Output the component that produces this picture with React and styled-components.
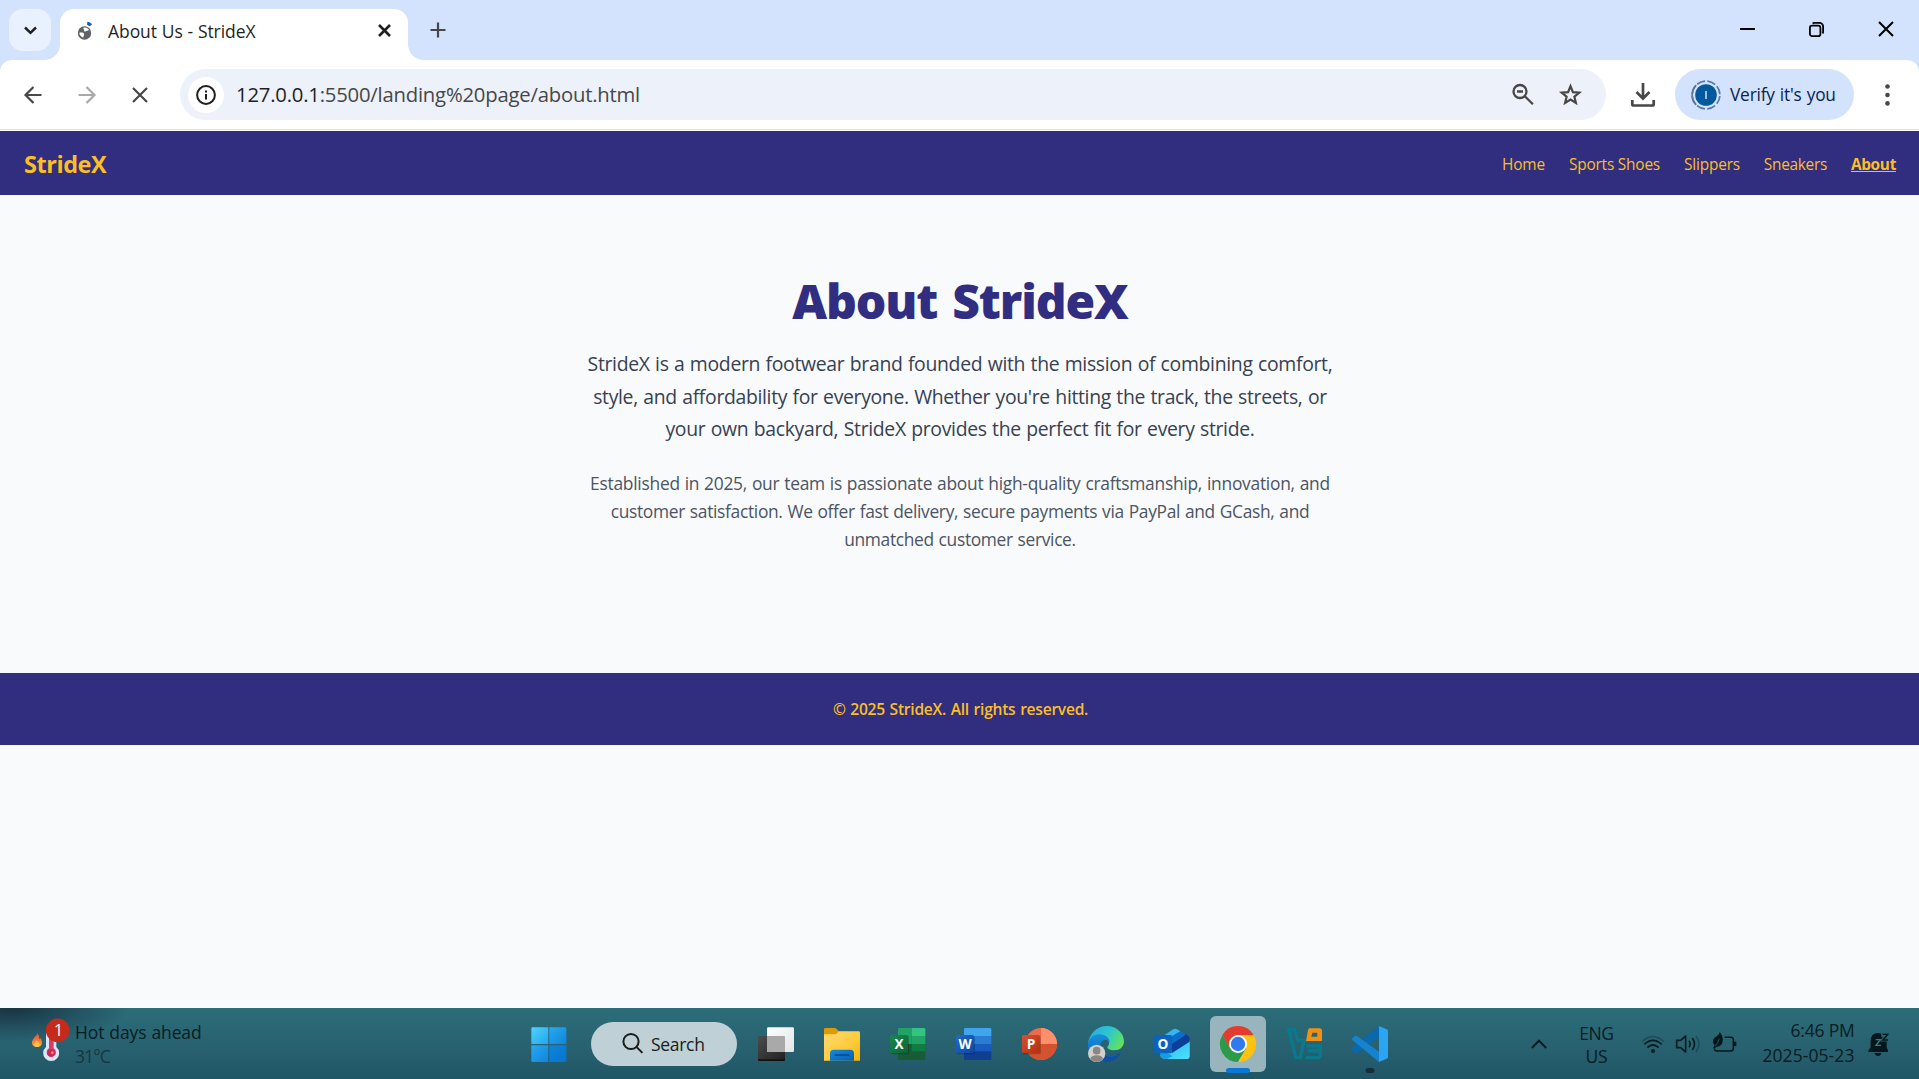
import React from "react";
import styled, { createGlobalStyle } from "styled-components";

const GlobalStyle = createGlobalStyle`
  *, *::before, *::after { box-sizing: border-box; }
  html, body { margin: 0; padding: 0; }
  body {
    overflow: hidden;
    background: #f9fafb;
    font-family: "Open Sans", "Noto Sans", sans-serif;
  }
  svg { display: block; flex: none; }
`;

const Screen = styled.div`
  display: flex;
  flex-direction: column;
  width: 100vw;
  height: 100vh;
  overflow: hidden;
  white-space: nowrap;
`;

const Icon = styled.svg`
  width: ${(p) => p.$w}px;
  height: ${(p) => p.$h || p.$w}px;
  overflow: visible;
`;

/* ---------- Browser chrome ---------- */

const TabStrip = styled.header`
  display: flex;
  flex: none;
  height: 60px;
  padding: 9px 0 0 9px;
  background: #d3e3fd;
`;

const TabSearchButton = styled.button`
  display: flex;
  align-items: center;
  justify-content: center;
  width: 42px;
  height: 42px;
  margin-right: 9px;
  padding: 0;
  border: 0;
  border-radius: 14px;
  background: #e9f1fe;
`;

const Tab = styled.div`
  position: relative;
  display: flex;
  align-items: center;
  width: 348px;
  height: 51px;
  padding: 0 17px 8px 17px;
  border-radius: 14px 14px 0 0;
  background: #fff;

  &::before,
  &::after {
    content: "";
    position: absolute;
    bottom: 0;
    width: 15px;
    height: 15px;
  }
  &::before {
    left: -15px;
    background: radial-gradient(circle at 0 0, transparent 14.5px, #fff 15px);
  }
  &::after {
    right: -15px;
    background: radial-gradient(circle at 100% 0, transparent 14.5px, #fff 15px);
  }
`;

const TabTitle = styled.span`
  flex: 1;
  margin-left: 14px;
  color: #1f1f1f;
  font-size: 17.5px;
  letter-spacing: -0.06px;
  word-spacing: 0.3px;
`;

const NewTabButton = styled.button`
  display: flex;
  align-items: center;
  justify-content: center;
  width: 42px;
  height: 42px;
  margin-left: 9px;
  padding: 0;
  border: 0;
  background: none;
`;

const WindowControls = styled.div`
  display: flex;
  height: 42px;
  margin: -1px -1px 0 auto;
`;

const WindowButton = styled.button`
  display: flex;
  align-items: center;
  justify-content: center;
  width: 69px;
  padding: 0;
  border: 0;
  background: none;
`;

const ToolbarBackdrop = styled.div`
  flex: none;
  height: 71px;
  background: #d3e3fd;
`;

const Toolbar = styled.div`
  display: flex;
  align-items: center;
  height: 71px;
  padding: 0 0 2px;
  border-radius: 12px 12px 0 0;
  background: linear-gradient(#fff 69px, #dfe1e5 69px, #dfe1e5 70px, #fff 70px);
`;

const NavButtons = styled.div`
  display: flex;
  align-items: center;
  width: 180px;
  padding-left: 24px;
  gap: 36px;
`;

const Omnibox = styled.div`
  display: flex;
  align-items: center;
  width: 1426px;
  height: 51px;
  padding: 0 24px 0 7.500px;
  border-radius: 26px;
  background: #ecf1fa;
`;

const SiteInfo = styled.div`
  display: flex;
  align-items: center;
  justify-content: center;
  width: 36px;
  height: 36px;
  margin-right: 12.500px;
  border-radius: 50%;
  background: #fff;
`;

const Url = styled.span`
  flex: 1;
  padding-bottom: 1px;
  color: #474747;
  font-size: 20.3px;
  letter-spacing: -0.21px;
`;

const UrlHost = styled.span`
  color: #1f1f1f;
`;

const OmniboxActions = styled.div`
  display: flex;
  align-items: center;
  gap: 25px;
`;

const Download = styled.div`
  display: flex;
  justify-content: center;
  width: 69px;
  padding: 1px 0 0 5px;
`;

const ProfilePill = styled.button`
  display: flex;
  align-items: center;
  width: 179px;
  height: 51px;
  padding: 0 0 0 16px;
  border: 0;
  border-radius: 26px;
  background: #d3e3fd;
  color: #0a2351;
  font: inherit;
  font-size: 17.3px;
  letter-spacing: -0.18px;
  word-spacing: 0.7px;
`;

const PillLabel = styled.span`
  margin-left: 9px;
`;

const MenuDots = styled.div`
  display: flex;
  flex: 1;
  justify-content: center;
  padding-left: 1px;
`;

/* ---------- Site ---------- */

const SiteNav = styled.nav`
  display: flex;
  flex: none;
  align-items: center;
  justify-content: space-between;
  height: 64px;
  padding: 1px 23px 0 24px;
  background: #312d7f;
  color: #fbbf24;
`;

const Brand = styled.span`
  font-size: 23.5px;
  font-weight: 700;
  letter-spacing: -0.45px;
`;

const NavLinks = styled.div`
  display: flex;
  align-items: center;
  gap: 23.900px;
  padding-top: 1px;
`;

const NavLink = styled.a`
  font-size: 15.4px;
  font-weight: ${(p) => (p.$active ? 700 : 400)};
  letter-spacing: ${(p) => p.$ls}px;
  text-decoration: ${(p) => (p.$active ? "underline" : "none")};
  text-underline-offset: 1px;
  text-decoration-thickness: 1px;
`;

const Main = styled.main`
  flex: none;
  height: 478px;
  padding-top: 76px;
  background: #f9fafc;
  text-align: center;
`;

const Title = styled.h1`
  margin: 0 0 17px;
  padding-left: 1px;
  color: #312e81;
  font-size: 48px;
  font-weight: 800;
  line-height: 60px;
  letter-spacing: -1.1px;
  word-spacing: 3.5px;
`;

const Lead = styled.p`
  margin: 0 0 23px;
  padding-left: 1px;
  color: #374151;
  font-size: 19.4px;
  line-height: 32.6px;
  word-spacing: 0.7px;
`;

const Detail = styled.p`
  margin: 0;
  padding-left: 1px;
  color: #4b5563;
  font-size: 17.4px;
  line-height: 28px;
  word-spacing: 0.6px;
`;

const Line = styled.span`
  display: block;
  letter-spacing: ${(p) => p.$ls}px;
`;

const SiteFooter = styled.footer`
  display: flex;
  flex: none;
  align-items: center;
  justify-content: center;
  height: 72px;
  padding: 0 0 0 2px;
  background: #312d7f;
  color: #fbbf24;
  font-size: 15.6px;
  font-weight: 600;
  letter-spacing: -0.26px;
  word-spacing: 0.9px;
`;

const PageRest = styled.div`
  flex: 1;
  background: #f9fafc;
`;

/* ---------- Taskbar ---------- */

const Taskbar = styled.footer`
  display: grid;
  flex: none;
  grid-template-columns: 1fr auto 1fr;
  align-items: center;
  height: 71px;
  background:
    radial-gradient(ellipse 120px 34px at 10px 0, rgba(22, 42, 58, 0.8) 10%, rgba(22, 42, 58, 0) 100%),
    linear-gradient(#2c6d7a, #28616f 55%, #1f5666);
  color: #091c22;
  font-size: 17.5px;
`;

const Weather = styled.div`
  display: flex;
  align-items: center;
  height: 71px;
  padding-left: 30px;
`;

const WeatherText = styled.div`
  display: flex;
  flex-direction: column;
  margin: 0 0 0 4px;
  line-height: 24px;
  letter-spacing: -0.12px;
  word-spacing: 0.6px;
`;

const Temperature = styled.span`
  color: #173641;
  letter-spacing: -0.9px;
`;

const Apps = styled.div`
  display: flex;
  align-items: center;
  height: 71px;
`;

const AppSlot = styled.div`
  display: flex;
  position: relative;
  align-items: center;
  justify-content: center;
  width: 66px;
  height: 71px;
  padding-top: 1px;
`;

const ActiveTile = styled.div`
  display: flex;
  align-items: center;
  justify-content: center;
  width: 56px;
  height: 56px;
  border-radius: 6px;
  background: #98b5bd;
`;

const Indicator = styled.div`
  position: absolute;
  bottom: ${(p) => p.$bottom}px;
  left: 50%;
  width: ${(p) => p.$w}px;
  height: 5px;
  border-radius: 3px;
  background: ${(p) => p.$color};
  transform: translateX(-50%);
`;

const SearchPill = styled.div`
  display: flex;
  align-items: center;
  width: 146px;
  height: 44px;
  margin: 1px 6px 0 9px;
  padding: 0 0 0 31px;
  gap: 7px;
  border-radius: 22px;
  background: #bfd0d6;
  color: #1c1c1c;
  letter-spacing: -0.3px;
`;

const Tray = styled.div`
  display: flex;
  align-items: center;
  justify-content: flex-end;
  padding-right: 30.500px;
`;

const Language = styled.div`
  display: flex;
  flex-direction: column;
  width: 36px;
  margin: 2px 27px 0 31px;
  line-height: 23px;
  text-align: center;
  letter-spacing: -0.4px;
`;

const Status = styled.div`
  display: flex;
  align-items: center;
  gap: 12px;
`;

const Clock = styled.div`
  display: flex;
  flex-direction: column;
  align-items: flex-end;
  margin: -1px 13px 0 25px;
  line-height: 25px;
  letter-spacing: 0.08px;
`;

const Time = styled.span`
  letter-spacing: -0.2px;
`;

/* ---------- Icons ---------- */

const Favicon = () => (
  <Icon $w={17} $h={20} viewBox="0 0 17 20">
    <circle cx="7.5" cy="12" r="6.7" fill="#5f6368" />
    <path d="M2.300 11.800c2.600-.6 4.900.1 4.900 1.600 0 1.100-.9 1.500-.9 3.100-2-.4-4-2.300-4-4.700zM6.400 6.700c2.100-.4 4.400.2 5.500 2-1 1.200-2.200.7-3 1.500-.8.7-1.700.4-1.700-.5 0-1-.9-1.300-.8-3z" fill="#fff" />
    <path d="M10.200 2.300c1.500.1 2.700.8 3.700 2" stroke="#0b57d0" strokeWidth="3.200" fill="none" />
  </Icon>
);

const ChevronDown = () => (
  <Icon $w={13} $h={9} viewBox="0 0 13 9">
    <path d="M1 1.500l5.500 5.300L12 1.500" fill="none" stroke="#1f1f1f" strokeWidth="2.500" />
  </Icon>
);

const Cross = ({ size, width, color }) => (
  <Icon $w={size} viewBox={`0 0 ${size} ${size}`}>
    <path d={`M1 1L${size - 1} ${size - 1}M${size - 1} 1L1 ${size - 1}`} stroke={color} strokeWidth={width} />
  </Icon>
);

const Plus = () => (
  <Icon $w={16} viewBox="0 0 16 16">
    <path d="M8 .5v15M.5 8h15" stroke="#474747" strokeWidth="2.200" />
  </Icon>
);

const Arrow = ({ color, flip }) => (
  <Icon $w={18} viewBox="0 0 18 18">
    <path d="M17.500 9H2M9.500 1L1.500 9l8 8" transform={flip ? "translate(18 0) scale(-1 1)" : undefined} fill="none" stroke={color} strokeWidth="2.200" />
  </Icon>
);

const Minimize = () => (
  <Icon $w={15} viewBox="0 0 15 15"><path d="M0 7h15" stroke="#000" strokeWidth="2" /></Icon>
);

const Restore = () => (
  <Icon $w={15} viewBox="0 0 15 15" fill="none" stroke="#000" strokeWidth="1.800">
    <rect x=".9" y="3.600" width="10.500" height="10.500" rx="2.200" />
    <path d="M3.600 1.400c.6-.4 1-.5 1.600-.5h5.300a3.600 3.600 0 013.600 3.600v5.300c0 .6-.1 1-.5 1.600" />
  </Icon>
);

const Info = () => (
  <Icon $w={20} viewBox="0 0 20 20">
    <circle cx="10" cy="10" r="8.900" fill="none" stroke="#1f1f1f" strokeWidth="2" />
    <path d="M10 9v5.600M10 5.400v2" stroke="#1f1f1f" strokeWidth="2" />
  </Icon>
);

const ZoomOut = () => (
  <Icon $w={22} viewBox="0 0 22 22" fill="none" stroke="#474747" strokeWidth="2.300">
    <circle cx="8" cy="7.500" r="6.500" />
    <path d="M12.600 12.100l8.300 8.200M5 7.500h6" />
  </Icon>
);

const Star = () => (
  <Icon $w={23} $h={22} viewBox="0 0 23 22">
    <path d="M11.500 2.200l2.400 5.900 6.400.5-4.900 4.100 1.500 6.200-5.400-3.300-5.400 3.300 1.500-6.200L2.700 8.600l6.400-.5z" fill="none" stroke="#474747" strokeWidth="2.200" />
  </Icon>
);

const DownloadIcon = () => (
  <Icon $w={24} viewBox="0 0 24 24" fill="none" stroke="#474747">
    <path d="M12 0v15M5.500 9L12 15.500 18.500 9" strokeWidth="2.700" />
    <path d="M1.300 17v4.200c0 .8.500 1.300 1.300 1.300h18.800c.8 0 1.300-.5 1.300-1.300V17" strokeWidth="2.700" />
  </Icon>
);

const Avatar = () => (
  <Icon $w={30} viewBox="0 0 30 30">
    <circle cx="15" cy="15" r="10.800" fill="#02589c" />
    <path d="M15 11v8" stroke="#c5d9ee" strokeWidth="1.600" />
    <circle cx="15" cy="15" r="13.900" fill="none" stroke="#5578ac" strokeWidth="1.700" strokeDasharray="8.500 2.420" strokeDashoffset="-1" />
    <path d="M5.200 5.200A13.900 13.900 0 005.200 24.800" fill="none" stroke="#5578ac" strokeWidth="1.700" />
  </Icon>
);

const Dots = () => (
  <Icon $w={5} $h={22} viewBox="0 0 5 22" fill="#474747">
    <circle cx="2.500" cy="2.500" r="2.300" /><circle cx="2.500" cy="11" r="2.300" /><circle cx="2.500" cy="19.400" r="2.300" />
  </Icon>
);

const Thermometer = () => (
  <Icon $w={41} $h={52} viewBox="90 51 123 156">
    <defs>
      <linearGradient id="flame" x1="0" y1="0" x2="0" y2="1"><stop offset="0" stopColor="#ef4b3c" /><stop offset=".5" stopColor="#f5793a" /><stop offset="1" stopColor="#ffb13d" /></linearGradient>
    </defs>
    <path d="M112 97c-2 9-16 16-16 29 0 7 6 12 15 12s15-5 15-13c0-6-3-8-3-13-3 1-4 2-5 4 0-8-2-14-6-19z" fill="url(#flame)" />
    <path d="M110 118c-3 5-7 8-7 13s4 7 8 7 8-3 8-7c0-3-2-5-3-8-2 1-3 2-3 3 0-3-1-6-3-8z" fill="#ffc24a" />
    <path d="M138 95c0-10 31-10 31 0v43a24 24 0 11-31 0z" fill="#dbe6f7" />
    <path d="M147 95h14v47a14 14 0 11-14 0z" fill="#dc3c63" />
    <circle cx="153" cy="156" r="11" fill="#c8284f" /><circle cx="157" cy="155" r="4" fill="#f48aa0" />
    <circle cx="173" cy="88" r="35.500" fill="#c42b1c" />
    <text x="176" y="105" fontSize="48" fill="#fff" textAnchor="middle">1</text>
  </Icon>
);

const StartIcon = () => (
  <Icon $w={36} viewBox="95 78 108 108">
    <defs>
      <linearGradient id="winA" x1="0" y1="0" x2="1" y2="1"><stop offset="0" stopColor="#4fd2fc" /><stop offset="1" stopColor="#22a5ee" /></linearGradient>
      <linearGradient id="winB" x1="0" y1="0" x2="1" y2="1"><stop offset="0" stopColor="#2aa9ef" /><stop offset="1" stopColor="#0f84dc" /></linearGradient>
      <linearGradient id="winC" x1="0" y1="0" x2="1" y2="1"><stop offset="0" stopColor="#0f83da" /><stop offset="1" stopColor="#0675d0" /></linearGradient>
    </defs>
    <path d="M100 82h47v50H96V86q0-4 4-4z" fill="url(#winA)" />
    <path d="M150 82h47q4 0 4 4v46h-51z" fill="url(#winB)" />
    <path d="M96 136h51v50h-47q-4 0-4-4z" fill="url(#winB)" />
    <path d="M150 136h51v46q0 4-4 4h-47z" fill="url(#winC)" />
  </Icon>
);

const SearchIcon = () => (
  <Icon $w={22} viewBox="0 0 22 22" fill="none" stroke="#1c1c1c" strokeWidth="2">
    <circle cx="9" cy="8.500" r="7.600" /><path d="M14.400 13.900l6 6" />
  </Icon>
);

const TaskViewIcon = () => (
  <Icon $w={36} viewBox="774 78 108 108">
    <defs>
      <linearGradient id="tvD" x1="0" y1="0" x2="1" y2="1"><stop offset="0" stopColor="#4c4c4c" /><stop offset="1" stopColor="#222" /></linearGradient>
      <linearGradient id="tvL" x1="0" y1="0" x2="1" y2="1"><stop offset="0" stopColor="#fff" /><stop offset="1" stopColor="#e2e4e6" /></linearGradient>
    </defs>
    <rect x="774" y="109" width="81" height="74" rx="4" fill="#111" />
    <rect x="774" y="108" width="81" height="70" rx="4" fill="url(#tvD)" />
    <rect x="801" y="82" width="81" height="74" rx="4" fill="url(#tvL)" />
    <path d="M801 108h51q3 0 3 3v45h-51q-3 0-3-3z" fill="#a9a9a9" />
  </Icon>
);

const ExplorerIcon = () => (
  <Icon $w={36} viewBox="72 78 108 108">
    <defs>
      <linearGradient id="fold" x1="0" y1="0" x2="1" y2="1"><stop offset="0" stopColor="#ffdb73" /><stop offset=".6" stopColor="#ffca3a" /><stop offset="1" stopColor="#f5b400" /></linearGradient>
      <linearGradient id="foldB" x1="0" y1="0" x2="1" y2="1"><stop offset="0" stopColor="#1689dc" /><stop offset="1" stopColor="#0560b0" /></linearGradient>
    </defs>
    <path d="M72 88q0-4 4-4h27q4 0 7 3l7 7v20H72z" fill="#de9c02" />
    <path d="M72 103h32q5 0 8-4l4-5h60q4 0 4 4v84H72z" fill="url(#fold)" />
    <path d="M90 182v-22q0-11 11-11h50q11 0 11 11v22z" fill="url(#foldB)" />
    <rect x="104" y="163" width="44" height="5" rx="2" fill="#074a8b" />
  </Icon>
);

const OfficeTile = ({ x, from, to, letter }) => (
  <>
    <defs>
      <linearGradient id={"tile" + letter} x1="0" y1="0" x2="1" y2="1"><stop offset="0" stopColor={from} /><stop offset="1" stopColor={to} /></linearGradient>
    </defs>
    <rect x={x + 2} y="107" width="55" height="56" rx="5" fill="#000" opacity=".2" />
    <rect x={x} y="105" width="54" height="54" rx="5" fill={`url(#tile${letter})`} />
    <text x={x + 27} y="147" fontSize="41" fontWeight="700" fill="#fff" textAnchor="middle">{letter}</text>
  </>
);

const ExcelIcon = () => (
  <Icon $w={36} viewBox="270 78 108 108">
    <path d="M298 84h37v24h-41V88q0-4 4-4z" fill="#21a366" /><path d="M335 84h37q4 0 4 4v20h-41z" fill="#33c481" />
    <path d="M294 108h41v24h-41z" fill="#1ea164" /><path d="M335 108h41v24h-41z" fill="#21a366" />
    <path d="M294 132h82v48h-82z" fill="#185c37" /><path d="M335 132h41v22h-41z" fill="#107c41" />
    <OfficeTile x={270} from="#18884f" to="#0b6631" letter="X" />
  </Icon>
);

const WordIcon = () => (
  <Icon $w={36} viewBox="468 78 108 108">
    <path d="M496 84h74q4 0 4 4v20h-82V88q0-4 4-4z" fill="#41a5ee" />
    <path d="M492 108h82v24h-82z" fill="#2b7cd3" /><path d="M492 132h82v24h-82z" fill="#185abd" />
    <path d="M492 154h82v22q0 4-4 4h-74q-4 0-4-4z" fill="#103f91" />
    <OfficeTile x={468} from="#2368c4" to="#0d47a8" letter="W" />
  </Icon>
);

const PowerPointIcon = () => (
  <Icon $w={36} viewBox="666 78 108 108">
    <circle cx="723" cy="132" r="48" fill="#ed6c47" />
    <path d="M723 84a48 48 0 0148 48h-48z" fill="#ff8f6b" />
    <path d="M675 132h96a48 48 0 01-96 0z" fill="#d35230" />
    <OfficeTile x={666} from="#d35230" to="#b52f12" letter="P" />
  </Icon>
);

const EdgeIcon = () => (
  <Icon $w={36} viewBox="12 42 108 108">
    <defs>
      <linearGradient id="edgeTop" x1="0" y1=".2" x2="1" y2=".6"><stop offset="0" stopColor="#2aa9e8" /><stop offset=".5" stopColor="#2cc5cf" /><stop offset="1" stopColor="#62e35a" /></linearGradient>
      <linearGradient id="edgeMid" x1="0" y1="0" x2="0" y2="1"><stop offset="0" stopColor="#1691dc" /><stop offset="1" stopColor="#0a60b5" /></linearGradient>
    </defs>
    <path d="M12 96C15 66 38 42 68 42c30 0 52 22 52 46 0 17-13 27-29 27-14 0-21-5-21-9 0-3 5-5 5-13 0-12-12-21-28-21-16 0-28 9-35 24z" fill="url(#edgeTop)" />
    <path d="M12 98c2-20 18-32 36-31 16 1 29 10 29 25-4-8-11-10-17-8-10 3-14 14-10 26 5 15 21 24 37 22 8-1 15-4 20-8 3-1 5 0 3 3-11 15-26 23-44 23-32 0-55-24-54-52z" fill="url(#edgeMid)" />
    <path d="M48 104c1 22 24 36 45 27 7-3 11-6 15-7 2 0 4 1 2 3-11 15-26 23-44 23-13 0-20-24-18-46z" fill="#10509f" />
    <circle cx="38" cy="124" r="26" fill="#d2cfcc" />
    <circle cx="38" cy="116" r="11.500" fill="#8b8684" /><path d="M19 141q2-11 19-11t19 11q-8 9-19 9t-19-9z" fill="#8b8684" />
  </Icon>
);

const OutlookIcon = () => (
  <Icon $w={36} viewBox="210 42 108 108">
    <defs>
      <linearGradient id="outF" x1="0" y1="0" x2="1" y2="1"><stop offset="0" stopColor="#28b5f1" /><stop offset="1" stopColor="#4fe0fc" /></linearGradient>
    </defs>
    <path d="M228 78l38-24q7-5 14 0l37 23v55q0 9-9 9h-62q-18 0-18-18z" fill="#1e8fe1" />
    <path d="M234 74l34-22q6-3 11 0l10 6-50 31z" fill="#35b6f0" />
    <path d="M246 82l44-24 14 9-41 30z" fill="#0a6fcb" />
    <path d="M317 86v46q0 9-9 9h-62q-12 0-17-9z" fill="url(#outF)" />
    <path d="M262 97l44-30 11 9v13l-53 34z" fill="#0c3f97" />
    <path d="M228 112l38 20-18 9q-20 0-20-18z" fill="#159be6" />
    <rect x="210" y="69" width="54" height="55" rx="5" fill="#0b63bd" />
    <text x="237" y="111" fontSize="41" fontWeight="700" fill="#fff" textAnchor="middle">O</text>
  </Icon>
);

const ChromeIcon = () => (
  <Icon $w={36} viewBox="408 42 108 108">
    <path d="M462 96L415.200 69A54 54 0 01508.800 69z" fill="#e33b2e" />
    <path d="M415.200 69A54 54 0 00462 150l24-41-47-1z" fill="#2c9a47" />
    <path d="M462 69h46.800A54 54 0 01462 150l24-40z" fill="#fdc10f" />
    <path d="M415.200 69l25 42 22-42z" fill="#e33b2e" />
    <circle cx="462" cy="96" r="27" fill="#fff" /><circle cx="462" cy="96" r="21.500" fill="#3079ee" />
  </Icon>
);

const SandboxIcon = () => (
  <Icon $w={36} viewBox="18 24 108 108">
    <path fillRule="evenodd" d="M19 30h29l9 32h22l-3 10-10 52H44zM33 40l18 74h6l8-42H50L41 40z" fill="#087a8c" />
    <path fillRule="evenodd" d="M80 79h46v38l-8 7H76l3-10h37v-10H82l3-12h31v-3H78z" fill="#087a8c" />
    <path fillRule="evenodd" d="M89 31h30q7 0 7 7v31H78l6-32q1-6 5-6zm8 13l-3 12h18V44z" fill="#f29111" />
  </Icon>
);

const CodeIcon = () => (
  <Icon $w={36} viewBox="216 24 108 108">
    <path d="M297 24v33l-67 47q-3 2-6-1l-7-7q-2-3 0-6z" fill="#0a68b0" />
    <path d="M217 61l7-7q3-3 6-1l67 48v31l-80-66q-2-2 0-5z" fill="#1583cf" />
    <path d="M297 24l23 10q4 2 4 6v76q0 4-4 6l-23 10z" fill="#2ba4f2" />
  </Icon>
);

const ChevronUp = () => (
  <Icon $w={16} $h={10} viewBox="0 0 16 10"><path d="M.8 9L8 1.700 15.200 9" fill="none" stroke="#0a1c22" strokeWidth="2" /></Icon>
);

const Wifi = () => (
  <Icon $w={23} $h={18} viewBox="423 102 69 54" fill="none" stroke="#0a1c22" strokeWidth="5">
    <path d="M426 122q33-30 66 0" opacity=".3" />
    <path d="M433 130q26-24 52 0M442 140q17-16 34 0" />
    <circle cx="459" cy="150" r="6" fill="#0a1c22" stroke="none" />
  </Icon>
);

const Speaker = () => (
  <Icon $w={24} $h={20} viewBox="531 102 72 60" fill="none" stroke="#0a1c22" strokeWidth="5" strokeLinejoin="round">
    <path d="M533 121h12l15-13v48l-15-13h-12z" />
    <path d="M570 122q7 10 0 20M580 114q13 18 0 36" />
    <path d="M591 108q18 24 0 48" opacity=".3" />
  </Icon>
);

const Battery = () => (
  <Icon $w={25} $h={21} viewBox="638 99 75 63">
    <path d="M676 112h19q7 0 7 7v26q0 8-7 8h-42q-7 0-7-5" fill="none" stroke="#06171c" strokeWidth="4.500" />
    <path d="M702 125h9v13h-9z" fill="#06171c" />
    <path d="M661 96q11 12 9 28-3 17-19 16l-6 7-4-3 5-8q-13-17 6-27 8-5 9-13z" fill="#06171c" />
    <path d="M648 138q8-9 12-22" stroke="#285f6c" strokeWidth="2.500" fill="none" />
  </Icon>
);

const Bell = () => (
  <Icon $w={21} $h={24} viewBox="1104 96 63 72">
    <path d="M1112 124q0-25 22-25 6 0 10 2v10h14q2 6 2 13v18l4 10v4h-59v-4l7-10zM1123 159h21q-2 9-10 9t-11-9z" fill="#06171c" />
    <path d="M1127 119h14l-13 17h15" fill="none" stroke="#3b7885" strokeWidth="4" />
    <path d="M1145 102h17l-15 18h18" fill="none" stroke="#285f6c" strokeWidth="9" />
    <path d="M1148 103h15l-15 17h16" fill="none" stroke="#06171c" strokeWidth="4" />
  </Icon>
);

/* ---------- Data ---------- */

const links = [
  { label: "Home", ls: -0.1 },
  { label: "Sports Shoes", ls: -0.19 },
  { label: "Slippers", ls: -0.16 },
  { label: "Sneakers", ls: -0.28 },
  { label: "About", ls: -0.32, active: true },
];

const lead = [
  ["StrideX is a modern footwear brand founded with the mission of combining comfort,", -0.32],
  ["style, and affordability for everyone. Whether you're hitting the track, the streets, or", -0.33],
  ["your own backyard, StrideX provides the perfect fit for every stride.", -0.32],
];

const detail = [
  ["Established in 2025, our team is passionate about high-quality craftsmanship, innovation, and", -0.26],
  ["customer satisfaction. We offer fast delivery, secure payments via PayPal and GCash, and", -0.32],
  ["unmatched customer service.", -0.34],
];

const leftApps = [TaskViewIcon, ExplorerIcon, ExcelIcon, WordIcon, PowerPointIcon, EdgeIcon, OutlookIcon];

export default function App() {
  return (
    <Screen>
      <GlobalStyle />
      <TabStrip>
        <TabSearchButton><ChevronDown /></TabSearchButton>
        <Tab>
          <Favicon />
          <TabTitle>About Us - StrideX</TabTitle>
          <Cross size={13} width={2.6} color="#1f1f1f" />
        </Tab>
        <NewTabButton><Plus /></NewTabButton>
        <WindowControls>
          <WindowButton><Minimize /></WindowButton>
          <WindowButton><Restore /></WindowButton>
          <WindowButton><Cross size={16} width={2} color="#000" /></WindowButton>
        </WindowControls>
      </TabStrip>
      <ToolbarBackdrop>
        <Toolbar>
          <NavButtons>
            <Arrow color="#474747" />
            <Arrow color="#a9a9a9" flip />
            <Cross size={16} width={2.2} color="#474747" />
          </NavButtons>
          <Omnibox>
            <SiteInfo><Info /></SiteInfo>
            <Url><UrlHost>127.0.0.1</UrlHost>:5500/landing%20page/about.html</Url>
            <OmniboxActions><ZoomOut /><Star /></OmniboxActions>
          </Omnibox>
          <Download><DownloadIcon /></Download>
          <ProfilePill><Avatar /><PillLabel>Verify it's you</PillLabel></ProfilePill>
          <MenuDots><Dots /></MenuDots>
        </Toolbar>
      </ToolbarBackdrop>

      <SiteNav>
        <Brand>StrideX</Brand>
        <NavLinks>
          {links.map((l) => <NavLink key={l.label} $ls={l.ls} $active={l.active}>{l.label}</NavLink>)}
        </NavLinks>
      </SiteNav>
      <Main>
        <Title>About StrideX</Title>
        <Lead>{lead.map(([text, ls]) => <Line key={text} $ls={ls}>{text}</Line>)}</Lead>
        <Detail>{detail.map(([text, ls]) => <Line key={text} $ls={ls}>{text}</Line>)}</Detail>
      </Main>
      <SiteFooter>© 2025 StrideX. All rights reserved.</SiteFooter>
      <PageRest />

      <Taskbar>
        <Weather>
          <Thermometer />
          <WeatherText><span>Hot days ahead</span><Temperature>31°C</Temperature></WeatherText>
        </Weather>
        <Apps>
          <AppSlot><StartIcon /></AppSlot>
          <SearchPill><SearchIcon />Search</SearchPill>
          {leftApps.map((AppIcon, i) => <AppSlot key={i}><AppIcon /></AppSlot>)}
          <AppSlot>
            <ActiveTile><ChromeIcon /></ActiveTile>
            <Indicator $w={24} $bottom={6} $color="#0a78d4" />
          </AppSlot>
          <AppSlot><SandboxIcon /></AppSlot>
          <AppSlot><CodeIcon /><Indicator $w={9} $bottom={6} $color="#15303a" /></AppSlot>
        </Apps>
        <Tray>
          <ChevronUp />
          <Language><span>ENG</span><span>US</span></Language>
          <Status><Wifi /><Speaker /><Battery /></Status>
          <Clock><Time>6:46 PM</Time><span>2025-05-23</span></Clock>
          <Bell />
        </Tray>
      </Taskbar>
    </Screen>
  );
}
